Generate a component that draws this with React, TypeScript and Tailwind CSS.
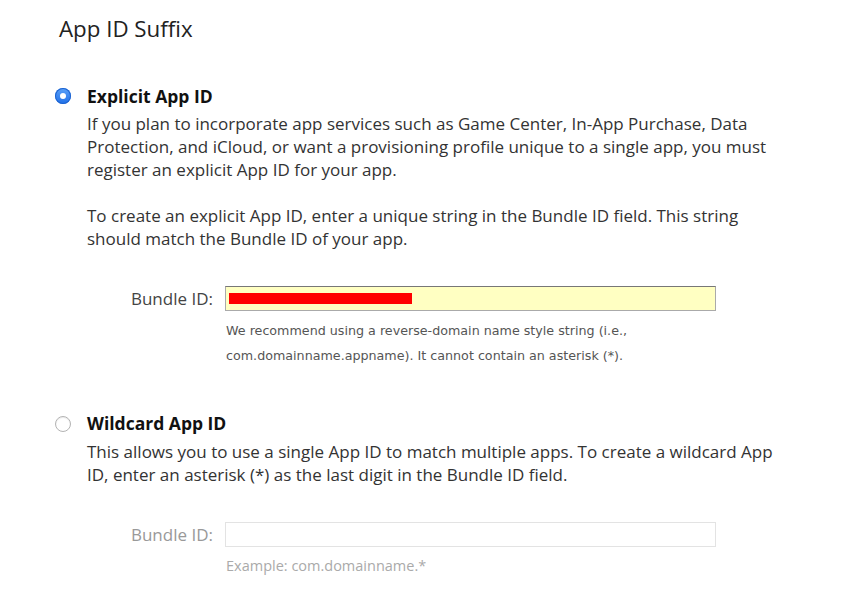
const FONT = "font-['Open_Sans','Noto_Sans',sans-serif]";

function Radio({ checked }: { checked: boolean }) {
  if (checked) {
    return (
      <span className="flex h-4 w-4 flex-none items-center justify-center rounded-full bg-gradient-to-b from-[#5aa0f7] to-[#1f6fe8] shadow-[inset_0_0_0_1px_#1d63d0]">
        <span className="h-[6px] w-[6px] rounded-full bg-white" />
      </span>
    );
  }
  return <span className="h-4 w-4 flex-none rounded-full border border-[#b3b3b3] bg-white shadow-[inset_0_1px_1px_rgba(0,0,0,0.08)]" />;
}

export default function App() {
  return (
    <div className={`min-h-[613px] w-[866px] bg-white text-[#333] ${FONT}`}>
      <h1 className="pl-[59px] pt-[15px] text-[22.3px] leading-[28px] text-[#222]">App ID Suffix</h1>

      <section className="mt-[39px] pl-[55px]">
        <div className="flex h-[28px] items-center gap-4">
          <Radio checked />
          <span className="text-[17.5px] font-bold text-[#111]">Explicit App ID</span>
        </div>
        <div className="mt-[2px] pl-[32px] text-[17px] leading-[23px]">
          <p>
            If you plan to incorporate app services such as Game Center, In-App Purchase, Data
            <br />
            Protection, and iCloud, or want a provisioning profile unique to a single app, you must
            <br />
            register an explicit App ID for your app.
          </p>
          <p className="mt-[23px]">
            To create an explicit App ID, enter a unique string in the Bundle ID field. This string
            <br />
            should match the Bundle ID of your app.
          </p>
        </div>

        <div className="mt-[36px] flex items-center pl-[32px]">
          <span className="w-[126px] text-right text-[17px] text-[#444]">Bundle ID:</span>
          <div className="ml-[12px] flex h-[25px] w-[491px] items-center border border-[#aaa] border-t-[#777] bg-[#ffffc2] pl-[3px]">
            <span className="h-[11px] w-[183px] bg-[#ff0000]" />
          </div>
        </div>
        <p className="mt-[6px] pl-[171px] font-['DejaVu_Sans',sans-serif] text-[12.7px] leading-[25px] text-[#555]">
          We recommend using a reverse-domain name style string (i.e.,
          <br />
          com.domainname.appname). It cannot contain an asterisk (*).
        </p>
      </section>

      <section className="mt-[42px] pl-[55px]">
        <div className="flex h-[28px] items-center gap-4">
          <Radio checked={false} />
          <span className="text-[17.5px] font-bold text-[#111]">Wildcard App ID</span>
        </div>
        <p className="mt-[2px] pl-[32px] text-[17px] leading-[23.5px]">
          This allows you to use a single App ID to match multiple apps. To create a wildcard App
          <br />
          ID, enter an asterisk (*) as the last digit in the Bundle ID field.
        </p>

        <div className="mt-[35px] flex items-center pl-[32px]">
          <span className="w-[126px] text-right text-[17px] text-[#999]">Bundle ID:</span>
          <div className="ml-[12px] h-[25px] w-[491px] border border-[#e3e3e3] bg-white" />
        </div>
        <p className="mt-[6px] pl-[171px] text-[14.5px] leading-[25px] text-[#aaa]">Example: com.domainname.*</p>
      </section>
    </div>
  );
}
